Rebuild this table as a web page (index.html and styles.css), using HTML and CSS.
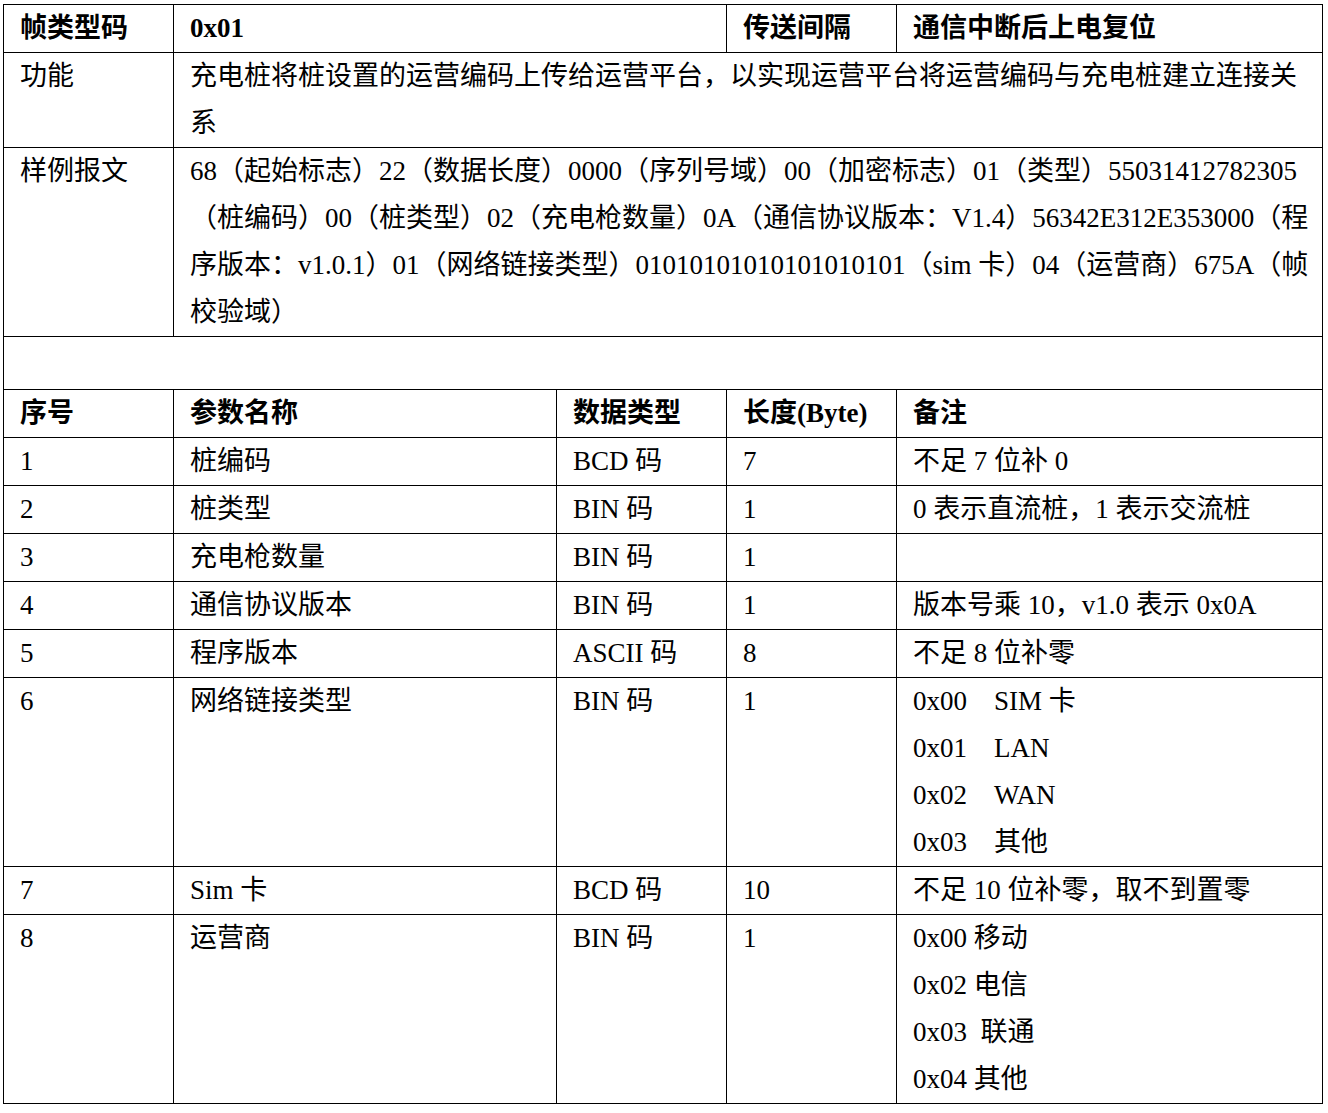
FILE: index.html
```html
<!DOCTYPE html>
<html lang="zh-CN">
<head>
<meta charset="utf-8">
<title>帧类型码 0x01</title>
<link rel="stylesheet" href="styles.css">
</head>
<body>
<table class="spec">
  <colgroup>
    <col class="c1">
    <col class="c2">
    <col class="c3">
    <col class="c4">
    <col class="c5">
  </colgroup>
  <tbody>
    <tr class="bold">
      <td>帧类型码</td>
      <td colspan="2">0x01</td>
      <td>传送间隔</td>
      <td>通信中断后上电复位</td>
    </tr>
    <tr>
      <td>功能</td>
      <td colspan="4" class="wide">充电桩将桩设置的运营编码上传给运营平台，以实现运营平台将运营编码与充电桩建立连接关系</td>
    </tr>
    <tr>
      <td>样例报文</td>
      <td colspan="4" class="wide">68（起始标志）22（数据长度）0000（序列号域）00（加密标志）01（类型）55031412782305（桩编码）00（桩类型）02（充电枪数量）0A（通信协议版本：V1.4）56342E312E353000（程序版本：v1.0.1）01（网络链接类型）01010101010101010101（sim 卡）04（运营商）675A（帧校验域）</td>
    </tr>
    <tr class="spacer">
      <td colspan="5"></td>
    </tr>
    <tr class="bold">
      <td>序号</td>
      <td>参数名称</td>
      <td>数据类型</td>
      <td>长度(Byte)</td>
      <td>备注</td>
    </tr>
    <tr>
      <td>1</td>
      <td>桩编码</td>
      <td>BCD 码</td>
      <td>7</td>
      <td>不足 7 位补 0</td>
    </tr>
    <tr>
      <td>2</td>
      <td>桩类型</td>
      <td>BIN 码</td>
      <td>1</td>
      <td>0 表示直流桩，1 表示交流桩</td>
    </tr>
    <tr>
      <td>3</td>
      <td>充电枪数量</td>
      <td>BIN 码</td>
      <td>1</td>
      <td></td>
    </tr>
    <tr>
      <td>4</td>
      <td>通信协议版本</td>
      <td>BIN 码</td>
      <td>1</td>
      <td>版本号乘 10，v1.0 表示 0x0A</td>
    </tr>
    <tr>
      <td>5</td>
      <td>程序版本</td>
      <td>ASCII 码</td>
      <td>8</td>
      <td>不足 8 位补零</td>
    </tr>
    <tr>
      <td>6</td>
      <td>网络链接类型</td>
      <td>BIN 码</td>
      <td>1</td>
      <td>
        <div class="opts">
          <span>0x00</span><span>SIM 卡</span>
          <span>0x01</span><span>LAN</span>
          <span>0x02</span><span>WAN</span>
          <span>0x03</span><span>其他</span>
        </div>
      </td>
    </tr>
    <tr>
      <td>7</td>
      <td>Sim 卡</td>
      <td>BCD 码</td>
      <td>10</td>
      <td>不足 10 位补零，取不到置零</td>
    </tr>
    <tr>
      <td>8</td>
      <td>运营商</td>
      <td>BIN 码</td>
      <td>1</td>
      <td>
        <div>0x00 移动</div>
        <div>0x02 电信</div>
        <div>0x03&nbsp; 联通</div>
        <div>0x04 其他</div>
      </td>
    </tr>
  </tbody>
</table>
</body>
</html>
```

FILE: styles.css
```css
html, body {
  background: #ffffff;
}

body {
  margin: 4px 0 0 3px;
  color: #000000;
  font-family: "Liberation Serif", "Noto Sans CJK SC", serif;
  font-size: 27px;
  line-height: 47px;
  text-spacing-trim: space-all;
  text-autospace: no-autospace;
}

.spec {
  border-collapse: collapse;
  table-layout: fixed;
  width: 1319px;
}

.c1 { width: 170px; }
.c2 { width: 383px; }
.c3 { width: 170px; }
.c4 { width: 170px; }
.c5 { width: 426px; }

.spec td {
  border: 1px solid #000000;
  padding: 0 8px 0 16px;
  vertical-align: top;
  white-space: normal;
}

.spec td.wide {
  padding-right: 10px;
}

.bold td {
  font-weight: bold;
}

.spacer td {
  height: 52px;
}

.opts {
  display: grid;
  grid-template-columns: 81px auto;
}
```
